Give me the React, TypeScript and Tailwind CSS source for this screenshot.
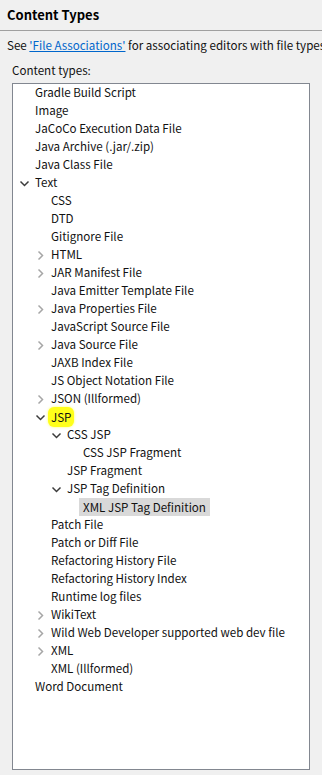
import React from 'react';

type Node = { label: string; level: number; toggle?: 'open' | 'closed'; selected?: boolean; marked?: boolean };

const rows: Node[] = [
  { label: 'Gradle Build Script', level: 0 },
  { label: 'Image', level: 0 },
  { label: 'JaCoCo Execution Data File', level: 0 },
  { label: 'Java Archive (.jar/.zip)', level: 0 },
  { label: 'Java Class File', level: 0 },
  { label: 'Text', level: 0, toggle: 'open' },
  { label: 'CSS', level: 1 },
  { label: 'DTD', level: 1 },
  { label: 'Gitignore File', level: 1 },
  { label: 'HTML', level: 1, toggle: 'closed' },
  { label: 'JAR Manifest File', level: 1, toggle: 'closed' },
  { label: 'Java Emitter Template File', level: 1 },
  { label: 'Java Properties File', level: 1, toggle: 'closed' },
  { label: 'JavaScript Source File', level: 1 },
  { label: 'Java Source File', level: 1, toggle: 'closed' },
  { label: 'JAXB Index File', level: 1 },
  { label: 'JS Object Notation File', level: 1 },
  { label: 'JSON (Illformed)', level: 1, toggle: 'closed' },
  { label: 'JSP', level: 1, toggle: 'open', marked: true },
  { label: 'CSS JSP', level: 2, toggle: 'open' },
  { label: 'CSS JSP Fragment', level: 3 },
  { label: 'JSP Fragment', level: 2 },
  { label: 'JSP Tag Definition', level: 2, toggle: 'open' },
  { label: 'XML JSP Tag Definition', level: 3, selected: true },
  { label: 'Patch File', level: 1 },
  { label: 'Patch or Diff File', level: 1 },
  { label: 'Refactoring History File', level: 1 },
  { label: 'Refactoring History Index', level: 1 },
  { label: 'Runtime log files', level: 1 },
  { label: 'WikiText', level: 1, toggle: 'closed' },
  { label: 'Wild Web Developer supported web dev file', level: 1, toggle: 'closed' },
  { label: 'XML', level: 1, toggle: 'closed' },
  { label: 'XML (Illformed)', level: 1 },
  { label: 'Word Document', level: 0 },
];

const pad = ['pl-[5px]', 'pl-[21px]', 'pl-[37px]', 'pl-[53px]'];

const Chevron: React.FC<{ open: boolean }> = ({ open }) =>
  open ? (
    <svg width="13" height="13" viewBox="0 0 13 13" className="shrink-0">
      <path d="M2.5 4.5 L6.5 8.5 L10.5 4.5" fill="none" stroke="#3c3c3c" strokeWidth="1.5" />
    </svg>
  ) : (
    <svg width="13" height="13" viewBox="0 0 13 13" className="shrink-0">
      <path d="M4.5 2.5 L8.5 6.5 L4.5 10.5" fill="none" stroke="#a6a6a6" strokeWidth="1.5" />
    </svg>
  );

const Row: React.FC<{ node: Node }> = ({ node }) => (
  <div className={`flex h-[18px] items-center gap-[4px] ${pad[node.level]}`}>
    <div className="flex w-[13px] justify-center">
      {node.toggle && <Chevron open={node.toggle === 'open'} />}
    </div>
    {node.marked ? (
      <span className="ml-[-3px] rounded-[6px] bg-[#ffff1a] px-[3px] leading-[20px] shadow-[0_0_3px_#ffff66]">{node.label}</span>
    ) : (
      <span className={node.selected ? 'px-[4px] ml-[-4px] bg-[#d9d9d9] leading-[18px]' : ''}>{node.label}</span>
    )}
  </div>
);

export default function App() {
  return (
    <div
      className="w-[322px] h-[775px] bg-[#f0f0f0] text-[11.6px] text-[#111] overflow-hidden flex flex-col"
      style={{ fontFamily: '"Noto Sans CJK KR", "Noto Sans", sans-serif' }}
    >
      <div className="h-[30px] flex items-center px-[7px] text-[13px] font-bold text-black">Content Types</div>
      <div className="h-px bg-[#a0a0a0]" />
      <div className="px-[7px] mt-[6px] h-[18px] flex items-center whitespace-nowrap">
        See&nbsp;<span className="text-[#0066cc] underline">'File Associations'</span>&nbsp;for associating editors with file types.
      </div>
      <div className="px-[12px] mt-[7px] h-[18px] flex items-center">Content types:</div>
      <div className="mx-[12px] mt-[3px] mb-[5px] flex-1 bg-white border border-[#828790]">
        {rows.map((n) => (
          <Row key={n.label} node={n} />
        ))}
      </div>
    </div>
  );
}
